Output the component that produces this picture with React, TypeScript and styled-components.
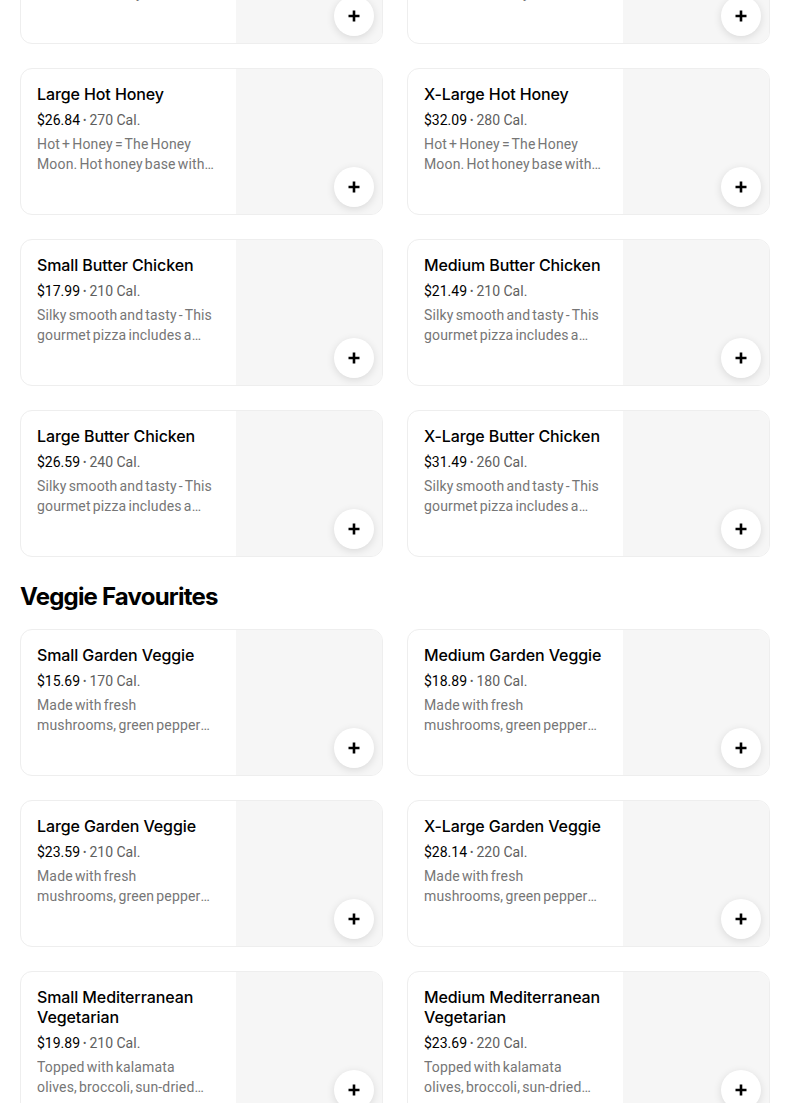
import React from "react";
import styled, { createGlobalStyle } from "styled-components";

const Global = createGlobalStyle`
  html, body { margin: 0; padding: 0; background: #fff; }
  body { font-family: Inter, "Noto Sans", "Liberation Sans", sans-serif; color: #000; overflow: hidden; }
`;

const Page = styled.div`
  padding: 0 20px;
  margin-top: -103px;
  width: 750px;
`;

const Section = styled.section`
  display: flex;
  flex-direction: column;
`;

const Heading = styled.h2`
  margin: 24px 0 16px;
  font-size: 24px;
  line-height: 32px;
  font-weight: 700;
  letter-spacing: -0.8px;
  color: #000;
`;

const Grid = styled.div`
  display: grid;
  grid-template-columns: repeat(2, 363px);
  column-gap: 24px;
  row-gap: 24px;
`;

const Card = styled.div`
  display: flex;
  border: 1px solid #eeeeee;
  border-radius: 12px;
  overflow: hidden;
  background: #fff;
  min-height: 145px;
`;

const Info = styled.div`
  flex: 1;
  padding: 15px 16px 16px 16px;
  display: flex;
  flex-direction: column;
  min-width: 0;
`;

const Title = styled.div`
  font-size: 16px;
  line-height: 20px;
  font-weight: 500;
  color: #000;
  letter-spacing: -0.1px;
`;

const Meta = styled.div`
  margin-top: 6px;
  font-family: Roboto, "Liberation Sans", sans-serif;
  font-size: 14px;
  line-height: 20px;
  color: #5e5e5e;
`;

const Price = styled.span`
  color: #000;
`;

const Dot = styled.span`
  font-size: 10px;
  margin: 0 3px;
  vertical-align: 1px;
`;

const Desc = styled.div`
  margin-top: 3px;
  margin-right: 5px;
  font-family: Roboto, "Liberation Sans", sans-serif;
  font-size: 14px;
  line-height: 20px;
  color: #767676;
  letter-spacing: 0.15px;
  word-spacing: -1.5px;
  display: -webkit-box;
  -webkit-line-clamp: 2;
  -webkit-box-orient: vertical;
  overflow: hidden;
`;

const ImageArea = styled.div`
  position: relative;
  width: 146px;
  flex: 0 0 146px;
  min-height: 145px;
  background: #f6f6f6;
`;

const AddButton = styled.button`
  position: absolute;
  right: 8px;
  top: 98px;
  width: 40px;
  height: 40px;
  border-radius: 50%;
  border: none;
  background: #fff;
  box-shadow: 0 2px 8px rgba(0, 0, 0, 0.12);
  display: flex;
  align-items: center;
  justify-content: center;
  padding: 0;
  cursor: pointer;
`;

const PlusIcon = () => (
  <svg width="14" height="14" viewBox="0 0 14 14" fill="none">
    <path d="M7 1.5v11M1.5 7h11" stroke="#000" strokeWidth="2.6" />
  </svg>
);

type Item = { name: string; price: string; cal: string; desc: string };

const Dish = ({ item }: { item: Item }) => (
  <Card>
    <Info>
      <Title>{item.name}</Title>
      <Meta>
        <Price>{item.price}</Price>
        <Dot>•</Dot>
        {item.cal}
      </Meta>
      <Desc>{item.desc}</Desc>
    </Info>
    <ImageArea>
      <AddButton aria-label="Add">
        <PlusIcon />
      </AddButton>
    </ImageArea>
  </Card>
);

const honey = "Hot + Honey = The Honey Moon. Hot honey base with pepperoni, red onions and a drizzle of honey.";
const butter = "Silky smooth and tasty - This gourmet pizza includes a butter chicken sauce base, grilled chicken and red onions.";
const veggie = "Made with fresh mushrooms, green peppers, red onions and tomatoes.";
const med = "Topped with kalamata olives, broccoli, sun-dried tomatoes and feta cheese.";

const first: Item[] = [
  { name: "Small Hot Honey", price: "$17.84", cal: "230 Cal.", desc: honey },
  { name: "Medium Hot Honey", price: "$21.34", cal: "250 Cal.", desc: honey },
  { name: "Large Hot Honey", price: "$26.84", cal: "270 Cal.", desc: honey },
  { name: "X-Large Hot Honey", price: "$32.09", cal: "280 Cal.", desc: honey },
  { name: "Small Butter Chicken", price: "$17.99", cal: "210 Cal.", desc: butter },
  { name: "Medium Butter Chicken", price: "$21.49", cal: "210 Cal.", desc: butter },
  { name: "Large Butter Chicken", price: "$26.59", cal: "240 Cal.", desc: butter },
  { name: "X-Large Butter Chicken", price: "$31.49", cal: "260 Cal.", desc: butter },
];

const veg: Item[] = [
  { name: "Small Garden Veggie", price: "$15.69", cal: "170 Cal.", desc: veggie },
  { name: "Medium Garden Veggie", price: "$18.89", cal: "180 Cal.", desc: veggie },
  { name: "Large Garden Veggie", price: "$23.59", cal: "210 Cal.", desc: veggie },
  { name: "X-Large Garden Veggie", price: "$28.14", cal: "220 Cal.", desc: veggie },
  { name: "Small Mediterranean Vegetarian", price: "$19.89", cal: "210 Cal.", desc: med },
  { name: "Medium Mediterranean Vegetarian", price: "$23.69", cal: "220 Cal.", desc: med },
];

export default function App() {
  return (
    <>
      <Global />
      <Page>
        <Section>
          <Grid>
            {first.map((it) => (
              <Dish key={it.name} item={it} />
            ))}
          </Grid>
        </Section>
        <Section>
          <Heading>Veggie Favourites</Heading>
          <Grid>
            {veg.map((it) => (
              <Dish key={it.name} item={it} />
            ))}
          </Grid>
        </Section>
      </Page>
    </>
  );
}
